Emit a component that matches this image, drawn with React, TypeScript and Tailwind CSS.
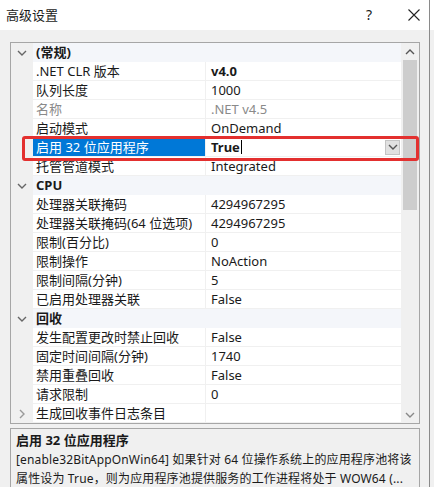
import React from "react";

type Row =
  | { kind: "cat"; label: string; open: boolean }
  | { kind: "prop"; name: string; value: string; bold?: boolean; gray?: boolean; selected?: boolean; collapsed?: boolean };

const rows: Row[] = [
  { kind: "cat", label: "(常规)", open: true },
  { kind: "prop", name: ".NET CLR 版本", value: "v4.0", bold: true },
  { kind: "prop", name: "队列长度", value: "1000" },
  { kind: "prop", name: "名称", value: ".NET v4.5", gray: true },
  { kind: "prop", name: "启动模式", value: "OnDemand" },
  { kind: "prop", name: "启用 32 位应用程序", value: "True", bold: true, selected: true },
  { kind: "prop", name: "托管管道模式", value: "Integrated" },
  { kind: "cat", label: "CPU", open: true },
  { kind: "prop", name: "处理器关联掩码", value: "4294967295" },
  { kind: "prop", name: "处理器关联掩码(64 位选项)", value: "4294967295" },
  { kind: "prop", name: "限制(百分比)", value: "0" },
  { kind: "prop", name: "限制操作", value: "NoAction" },
  { kind: "prop", name: "限制间隔(分钟)", value: "5" },
  { kind: "prop", name: "已启用处理器关联", value: "False" },
  { kind: "cat", label: "回收", open: true },
  { kind: "prop", name: "发生配置更改时禁止回收", value: "False" },
  { kind: "prop", name: "固定时间间隔(分钟)", value: "1740" },
  { kind: "prop", name: "禁用重叠回收", value: "False" },
  { kind: "prop", name: "请求限制", value: "0" },
  { kind: "prop", name: "生成回收事件日志条目", value: "", collapsed: true },
];

const ChevDown = ({ c = "#555" }: { c?: string }) => (
  <svg width="10" height="6" viewBox="0 0 10 6">
    <path d="M1 1 L5 5 L9 1" stroke={c} strokeWidth="1.4" fill="none" />
  </svg>
);
const ChevRight = () => (
  <svg width="6" height="10" viewBox="0 0 6 10">
    <path d="M1 1 L5 5 L1 9" stroke="#999" strokeWidth="1.4" fill="none" />
  </svg>
);
const ChevUp = () => (
  <svg width="10" height="6" viewBox="0 0 10 6">
    <path d="M1 5 L5 1 L9 5" stroke="#555" strokeWidth="1.4" fill="none" />
  </svg>
);

export default function App() {
  return (
    <div
      className="relative w-[434px] h-[487px] overflow-hidden bg-[#f0f0f0] text-[13px] text-[#1a1a1a]"
      style={{ fontFamily: '"Noto Sans", "Noto Sans CJK SC", sans-serif' }}
    >
      {/* title bar */}
      <div className="h-[30px] bg-white flex items-center pl-[6px] pr-[14px]">
        <span className="text-[13px] leading-none">高级设置</span>
        <span className="ml-auto mr-[36px] text-[14px] leading-none">?</span>
        <svg width="12" height="12" viewBox="0 0 12 12">
          <path d="M0.5 0.5 L11.5 11.5 M11.5 0.5 L0.5 11.5" stroke="#222" strokeWidth="1.1" />
        </svg>
      </div>

      <div className="pt-[12px] pl-[10px]">
        {/* grid */}
        <div className="relative w-[410px] border border-[#a6a6a6] bg-white flex">
          <div className="w-[390px] flex flex-col">
            {rows.map((r, i) => {
              if (r.kind === "cat") {
                return (
                  <div key={i} className="h-[19px] flex">
                    <div className="w-[22px] bg-[#f0f0f0] flex items-center justify-center">
                      <ChevDown c="#666" />
                    </div>
                    <div className="flex-1 bg-[#f4f6fa] flex items-center pl-[3px] font-bold leading-none">
                      {r.label}
                    </div>
                  </div>
                );
              }
              return (
                <div key={i} className="h-[19px] flex">
                  <div className="w-[22px] bg-[#f0f0f0] flex items-center justify-center">
                    {r.collapsed && <ChevRight />}
                  </div>
                  <div
                    className={
                      "w-[172px] flex items-center pl-[3px] leading-none whitespace-nowrap border-b border-[#f0f0f0] " +
                      (r.selected ? "bg-[#0078d7] text-white border-[#0078d7]" : r.gray ? "text-[#8a8a8a]" : "")
                    }
                  >
                    {r.name}
                  </div>
                  <div
                    className={
                      "flex-1 flex items-center pl-[5px] leading-none border-b border-l border-[#f0f0f0] " +
                      (r.bold ? "font-bold " : "") +
                      (r.gray ? "text-[#8a8a8a]" : "")
                    }
                  >
                    {r.value}
                    {r.selected && (
                      <>
                        <span className="w-px h-[14px] bg-black ml-px" />
                        <div className="ml-auto mr-[1px] w-[15px] h-[15px] bg-[#e1e1e1] border border-[#c4c4c4] flex items-center justify-center">
                          <ChevDown c="#555" />
                        </div>
                      </>
                    )}
                  </div>
                </div>
              );
            })}
          </div>
          {/* scrollbar */}
          <div className="w-[18px] bg-[#f0f0f0] flex flex-col items-center">
            <div className="h-[17px] flex items-center justify-center">
              <ChevUp />
            </div>
            <div className="w-[14px] h-[150px] bg-[#cdcdcd]" />
            <div className="flex-1" />
            <div className="h-[17px] flex items-center justify-center">
              <ChevDown c="#888" />
            </div>
          </div>

          {/* red highlight */}
          <div className="absolute left-[11px] top-[93px] w-[397px] h-[25px] border-[3px] border-[#e3302f] rounded-[3px]" />
        </div>

        {/* description */}
        <div className="mt-[4px] w-[410px] h-[70px] border border-[#a6a6a6] bg-[#f0f0f0] px-[5px] pt-[2px] relative">
          <div className="font-bold leading-[19px] text-[13px]">启用 32 位应用程序</div>
          <div className="leading-[19px] whitespace-nowrap text-[12px] tracking-[0.15px]">[enable32BitAppOnWin64] 如果针对 64 位操作系统上的应用程序池将该</div>
          <div className="leading-[19px] whitespace-nowrap text-[12px] tracking-[0.15px]">属性设为 True，则为应用程序池提供服务的工作进程将处于 WOW64 (...</div>
        </div>
      </div>

      {/* right edge of other window */}
      <div className="absolute right-[4px] top-0 bottom-0 w-px bg-[#8a8a8a]" />
    </div>
  );
}
